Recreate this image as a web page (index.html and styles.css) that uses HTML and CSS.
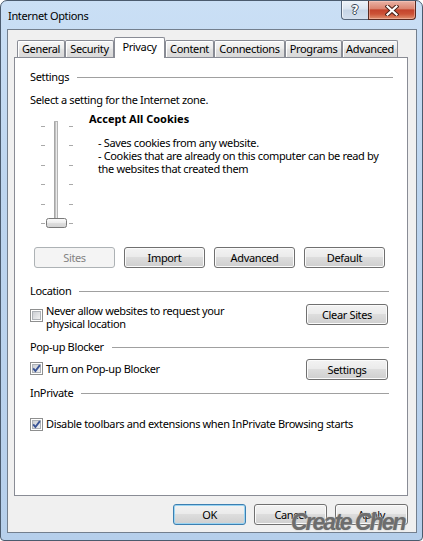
FILE: index.html
```html
<!DOCTYPE html>
<html lang="en">
<head>
<meta charset="utf-8">
<title>Internet Options</title>
<link rel="stylesheet" href="styles.css">
</head>
<body>
<div class="window">
  <div class="titlebar">
    <span class="title">Internet Options</span>
    <div class="caption-buttons">
      <div class="cap-btn cap-help"><span class="help-glyph">?</span></div>
      <div class="cap-btn cap-close">
        <svg width="14" height="11" viewBox="0 0 14 11">
          <path d="M2.5 1.5 L11.5 9.5 M11.5 1.5 L2.5 9.5" stroke="#4a2118" stroke-width="4.2" stroke-linecap="square" fill="none"/>
          <path d="M2.5 1.5 L11.5 9.5 M11.5 1.5 L2.5 9.5" stroke="#ffffff" stroke-width="2.2" stroke-linecap="square" fill="none"/>
        </svg>
      </div>
    </div>
  </div>

  <div class="client">
    <div class="tabs">
      <div class="tab tab-general">General</div>
      <div class="tab tab-security">Security</div>
      <div class="tab tab-privacy is-selected">Privacy</div>
      <div class="tab tab-content">Content</div>
      <div class="tab tab-connections">Connections</div>
      <div class="tab tab-programs">Programs</div>
      <div class="tab tab-advanced">Advanced</div>
    </div>

    <div class="panel">
      <div class="group-head group-head-wide"><span>Settings</span><i class="rule"></i></div>
      <p class="line intro">Select a setting for the Internet zone.</p>

      <div class="zone">
        <svg class="slider" width="59" height="120" viewBox="0 0 59 120">
          <defs>
            <linearGradient id="thumbg" x1="0" y1="0" x2="0" y2="1">
              <stop offset="0" stop-color="#fbfbfb"/>
              <stop offset="0.5" stop-color="#ececec"/>
              <stop offset="0.5" stop-color="#dedede"/>
              <stop offset="1" stop-color="#d2d2d2"/>
            </linearGradient>
            <linearGradient id="cbg" x1="0" y1="0" x2="1" y2="1">
              <stop offset="0" stop-color="#c9ccd1"/>
              <stop offset="1" stop-color="#f3f3f4"/>
            </linearGradient>
          </defs>
          <g stroke="#a9a9a9" stroke-width="1">
            <path d="M11 14.5 H15 M39 14.5 H43"/>
            <path d="M11 33.5 H15 M39 33.5 H43"/>
            <path d="M11 53.5 H15 M39 53.5 H43"/>
            <path d="M11 72.5 H15 M39 72.5 H43"/>
            <path d="M11 92.5 H15 M39 92.5 H43"/>
            <path d="M11 111.5 H15 M39 111.5 H43"/>
          </g>
          <rect x="24.5" y="9.5" width="3" height="104" fill="#e9e9e9" stroke="#b4b4b4"/>
          <path d="M25 10 V113" stroke="#9a9a9a"/>
          <rect x="16.5" y="106.5" width="20" height="9" rx="2" fill="url(#thumbg)" stroke="#7a7a7a"/>
        </svg>
        <div class="zone-text">
          <div class="level">Accept All Cookies</div>
          <div class="desc">
            <div>- Saves cookies from any website.</div>
            <div>- Cookies that are already on this computer can be read by</div>
            <div>the websites that created them</div>
          </div>
        </div>
      </div>

      <div class="btn-row">
        <button class="btn btn-wide" disabled>Sites</button>
        <button class="btn btn-wide">Import</button>
        <button class="btn btn-wide">Advanced</button>
        <button class="btn btn-wide">Default</button>
      </div>

      <div class="group-head group-location"><span>Location</span><i class="rule"></i></div>
      <div class="option-row row-location">
        <label class="check-label">
          <svg class="check" width="13" height="13" viewBox="0 0 13 13">
            <rect x="0.5" y="0.5" width="12" height="12" fill="#ffffff" stroke="#8e8f8f"/>
            <rect x="2.5" y="2.5" width="8" height="8" fill="url(#cbg)" stroke="#aeb2b7"/>
          </svg>
          <span class="check-text">Never allow websites to request your<br>physical location</span>
        </label>
        <button class="btn btn-side">Clear Sites</button>
      </div>

      <div class="group-head group-popup"><span>Pop-up Blocker</span><i class="rule"></i></div>
      <div class="option-row row-popup">
        <label class="check-label">
          <svg class="check" width="13" height="13" viewBox="0 0 13 13">
            <rect x="0.5" y="0.5" width="12" height="12" fill="#ffffff" stroke="#8e8f8f"/>
            <rect x="2.5" y="2.5" width="8" height="8" fill="url(#cbg)" stroke="#aeb2b7"/>
            <path d="M3.2 6.4 L5.4 9 L9.9 3.2" fill="none" stroke="#3a5496" stroke-width="1.9"/>
          </svg>
          <span class="check-text">Turn on Pop-up Blocker</span>
        </label>
        <button class="btn btn-side">Settings</button>
      </div>

      <div class="group-head group-inprivate"><span>InPrivate</span><i class="rule"></i></div>
      <div class="option-row row-inprivate">
        <label class="check-label">
          <svg class="check" width="13" height="13" viewBox="0 0 13 13">
            <rect x="0.5" y="0.5" width="12" height="12" fill="#ffffff" stroke="#8e8f8f"/>
            <rect x="2.5" y="2.5" width="8" height="8" fill="url(#cbg)" stroke="#aeb2b7"/>
            <path d="M3.2 6.4 L5.4 9 L9.9 3.2" fill="none" stroke="#3a5496" stroke-width="1.9"/>
          </svg>
          <span class="check-text">Disable toolbars and extensions when InPrivate Browsing starts</span>
        </label>
      </div>
    </div>

    <div class="dialog-buttons">
      <button class="btn btn-dialog btn-default">OK</button>
      <button class="btn btn-dialog">Cancel</button>
      <button class="btn btn-dialog">Apply</button>
    </div>
  </div>

  <div class="watermark">Create Chen</div>
</div>
</body>
</html>
```

FILE: styles.css
```css
* { box-sizing: border-box; }

html, body {
  margin: 0;
  padding: 0;
}

body {
  width: 423px;
  height: 541px;
  overflow: hidden;
  background: #ffffff;
  font-family: "Noto Sans", "Liberation Sans", sans-serif;
  font-size: 11px;
  line-height: 13px;
  letter-spacing: -0.35px;
  color: #000000;
}

.window {
  position: relative;
  width: 423px;
  height: 541px;
  border: 1px solid #4b5b6e;
  border-radius: 7px 7px 4px 4px;
  background: linear-gradient(180deg, #cadff5 0%, #bdd5ef 35%, #b6cfeb 100%);
  padding: 0 5px 7px 6px;
  display: flex;
  flex-direction: column;
}

/* ---------- title bar ---------- */
.titlebar {
  height: 28px;
  display: flex;
  align-items: center;
  padding-left: 1px;
}

.title {
  font-size: 11px;
  color: #000;
  margin-top: 1px;
}

.caption-buttons {
  margin-left: auto;
  margin-right: 1px;
  align-self: flex-start;
  display: flex;
}

.cap-btn {
  height: 19px;
  border: 1px solid #56657a;
  border-top: none;
  display: flex;
  align-items: center;
  justify-content: center;
}

.cap-help {
  width: 27px;
  border-right: none;
  border-radius: 0 0 0 4px;
  background: linear-gradient(180deg, #eef3f9 0%, #dae4f0 45%, #c6d4e6 50%, #d3dfee 100%);
  box-shadow: inset 1px 0 0 rgba(255,255,255,0.7);
}

.help-glyph {
  font-family: "DejaVu Sans", sans-serif;
  font-weight: bold;
  font-size: 12px;
  line-height: 12px;
  letter-spacing: 0;
  color: #ffffff;
  text-shadow: 1px 0 0 #3b4656, -1px 0 0 #3b4656, 0 1px 0 #3b4656, 0 -1px 0 #3b4656;
}

.cap-close {
  width: 48px;
  border-color: #5a2a20;
  border-radius: 0 0 4px 0;
  background: linear-gradient(180deg, #eab3a6 0%, #dc8571 42%, #c4442c 50%, #cc5236 72%, #e0906f 100%);
  box-shadow: inset 0 0 0 1px rgba(255,210,200,0.45);
}

/* ---------- client ---------- */
.client {
  flex: 1;
  border: 1px solid #737f8e;
  background: #f0f0f0;
  padding: 7px 8px 7px 6px;
  display: flex;
  flex-direction: column;
}

.tabs {
  display: flex;
  align-items: flex-start;
  height: 20px;
  margin-left: 3px;
}

.tab {
  height: 17px;
  margin-top: 3px;
  border: 1px solid #898c95;
  border-bottom: none;
  border-radius: 2px 2px 0 0;
  background: linear-gradient(180deg, #f7f7f7 0%, #ececec 45%, #e1e1e1 55%, #d9d9d9 100%);
  box-shadow: inset 1px 1px 0 #ffffff;
  text-align: center;
  padding-top: 1px;
  white-space: nowrap;
}

.tab.is-selected {
  position: relative;
  z-index: 1;
  height: 21px;
  margin-top: 0;
  margin-bottom: -1px;
  padding-top: 2px;
  background: #ffffff;
  box-shadow: none;
}

.tab-general { width: 48px; }
.tab-security { width: 49px; }
.tab-privacy { width: 51px; }
.tab-content { width: 49px; }
.tab-connections { width: 71px; }
.tab-programs { width: 57px; }
.tab-advanced { width: 56px; }

.panel {
  flex: 1;
  background: #ffffff;
  border: 1px solid #898c95;
  padding: 12px 18px 0 15px;
  display: flex;
  flex-direction: column;
}

.group-head {
  display: flex;
  align-items: center;
  height: 13px;
}

.group-head .rule {
  flex: 1;
  height: 1px;
  background: #a0a0a0;
  margin-left: 8px;
  margin-top: 2px;
}

.group-head-wide { margin-right: -4px; }

.line { margin: 0; }

.intro { margin-top: 10px; }

.zone {
  display: flex;
  margin-top: 6px;
  height: 120px;
}

.slider { flex: none; display: block; }

.zone-text { display: flex; flex-direction: column; white-space: nowrap; }

.level { font-weight: bold; letter-spacing: 0; }

.desc {
  margin-top: 11px;
  padding-left: 9px;
}

.btn-row {
  display: flex;
  gap: 9px;
  margin-top: 15px;
  margin-left: 4px;
}

/* ---------- buttons ---------- */
.btn {
  height: 21px;
  padding: 0;
  border: 1px solid #707070;
  border-radius: 3px;
  background: linear-gradient(180deg, #f3f3f3 0%, #ebebeb 45%, #dddddd 50%, #cfcfcf 100%);
  box-shadow: inset 0 0 0 1px #fbfbfb;
  font-family: inherit;
  font-size: 11px;
  line-height: 13px;
  letter-spacing: -0.35px;
  color: #000;
  display: flex;
  align-items: center;
  justify-content: center;
  flex: none;
}

.btn:disabled {
  border-color: #adb2b5;
  background: #f4f4f4;
  box-shadow: none;
  color: #838383;
}

.btn-wide { width: 81px; }

.btn-side {
  width: 82px;
  margin-left: auto;
  margin-right: 1px;
}

.btn-dialog { width: 73px; }

.btn-default {
  border-color: #3c7fb1;
  box-shadow: inset 0 0 0 1px #9ad4f2;
}

/* ---------- option rows ---------- */
.group-location { margin-top: 16px; }
.group-popup { margin-top: 10px; }
.group-inprivate { margin-top: 6px; }

.option-row {
  display: flex;
  align-items: flex-start;
}

.row-location { margin-top: 7px; }
.row-popup { margin-top: 6px; }
.row-inprivate { margin-top: 18px; }

.check-label {
  display: flex;
  align-items: flex-start;
  gap: 3px;
  white-space: nowrap;
}

.check { flex: none; display: block; }

.row-location .check { margin-top: 5px; }
.row-popup .check-label { margin-top: 3px; }
.row-inprivate .check { margin-top: 1px; }

/* ---------- dialog buttons ---------- */
.dialog-buttons {
  display: flex;
  justify-content: flex-end;
  gap: 8px;
  margin-top: 8px;
}

/* ---------- watermark overlay ---------- */
.watermark {
  position: absolute;
  left: 290px;
  top: 508px;
  font-family: "Liberation Sans", sans-serif;
  font-weight: bold;
  font-style: italic;
  font-size: 23px;
  line-height: 26px;
  letter-spacing: -2px;
  color: #6d6d6d;
  text-shadow: 0 0 1px #b0b0b0, 0 0 2px #d0d0d0;
  white-space: nowrap;
}
```
